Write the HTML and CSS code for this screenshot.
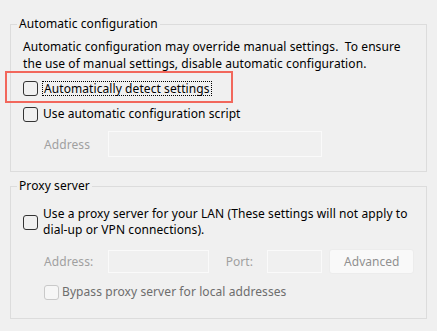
FILE: index.html
```html
<!DOCTYPE html>
<html lang="en">
<head>
  <meta charset="UTF-8">
  <title>Local Area Network (LAN) Settings</title>
  <link rel="stylesheet" href="styles.css">
</head>
<body>
  <fieldset class="group auto">
    <legend>Automatic configuration</legend>
    <p class="note">Automatic configuration may override manual settings.&nbsp; To ensure<br>the use of manual settings, disable automatic configuration.</p>
    <label class="row highlighted">
      <input type="checkbox" class="check">
      <span class="focused">Automatically detect settings</span>
    </label>
    <label class="row">
      <input type="checkbox" class="check">
      <span>Use automatic configuration script</span>
    </label>
    <div class="field-row script-row">
      <span class="muted addr-label">Address</span>
      <input type="text" class="textbox script-addr" disabled>
    </div>
  </fieldset>

  <fieldset class="group proxy">
    <legend>Proxy server</legend>
    <label class="row two-line">
      <input type="checkbox" class="check">
      <span>Use a proxy server for your LAN (These settings will not apply to<br>dial-up or VPN connections).</span>
    </label>
    <div class="field-row proxy-row">
      <span class="muted addr-label">Address:</span>
      <input type="text" class="textbox proxy-addr" disabled>
      <span class="muted port-label">Port:</span>
      <input type="text" class="textbox port" disabled>
      <button class="btn" disabled>Advanced</button>
    </div>
    <label class="row bypass">
      <input type="checkbox" class="check" disabled>
      <span>Bypass proxy server for local addresses</span>
    </label>
  </fieldset>
</body>
</html>
```

FILE: styles.css
```css
body {
  margin: 0;
  background: #f0f0f0;
  font-family: "Noto Sans", "Open Sans", sans-serif;
  font-size: 12px;
  letter-spacing: 0.08px;
  color: #000;
}

.group {
  margin: 0 10px;
  padding: 6px 12px 14px 12px;
  border: 1px solid #dcdcdc;
  min-width: 0;
}

.group legend {
  margin-left: -6px;
  padding: 0 2px;
  line-height: 16px;
}

.auto {
  margin-top: 16px;
}

.proxy {
  margin-top: 6px;
  padding-top: 12px;
  padding-bottom: 18px;
}

.note {
  margin: 0;
  line-height: 17px;
  white-space: nowrap;
}

.row {
  display: flex;
  align-items: center;
  gap: 5px;
  line-height: 16px;
  white-space: nowrap;
}

.auto .row {
  margin-top: 10px;
}

.auto .highlighted {
  position: relative;
  margin-top: 9px;
}

.highlighted::after {
  content: "";
  position: absolute;
  left: -18px;
  top: -10px;
  width: 224px;
  height: 28px;
  border: 2px solid #f2675c;
  pointer-events: none;
}

.focused {
  outline: 1px dotted #000;
  outline-offset: 0;
  padding: 0 1px;
  line-height: 13px;
}

.check {
  appearance: none;
  -webkit-appearance: none;
  margin: 0;
  width: 15px;
  height: 15px;
  flex: none;
  border: 1px solid #333;
  border-radius: 3px;
  background: #f0f0f0;
}

.check:disabled {
  border-color: #c9c9c9;
  background: #f6f6f6;
}

.field-row {
  display: flex;
  align-items: center;
  padding-left: 21px;
}

.script-row {
  margin-top: 9px;
}

.muted {
  color: #a0a0a0;
}

.addr-label {
  width: 64px;
}

.textbox {
  margin: 0;
  box-sizing: border-box;
  border: 1px solid #fafafa;
  background: #f0f0f0;
  font: inherit;
}

.script-addr {
  width: 214px;
  height: 26px;
}

.proxy-row {
  margin-top: 10px;
  height: 26px;
}

.proxy-addr {
  width: 101px;
  height: 23px;
}

.port-label {
  margin-left: 17px;
  width: 42px;
}

.port {
  width: 55px;
  height: 23px;
}

.btn {
  margin-left: 7px;
  width: 85px;
  height: 25px;
  border: 1px solid #ececec;
  border-radius: 3px;
  background: #f9f9f9;
  color: #909090;
  font: inherit;
  padding: 0;
}

.bypass {
  margin-top: 10px;
  padding-left: 21px;
  gap: 3px;
  color: #6d6d6d;
}
```
